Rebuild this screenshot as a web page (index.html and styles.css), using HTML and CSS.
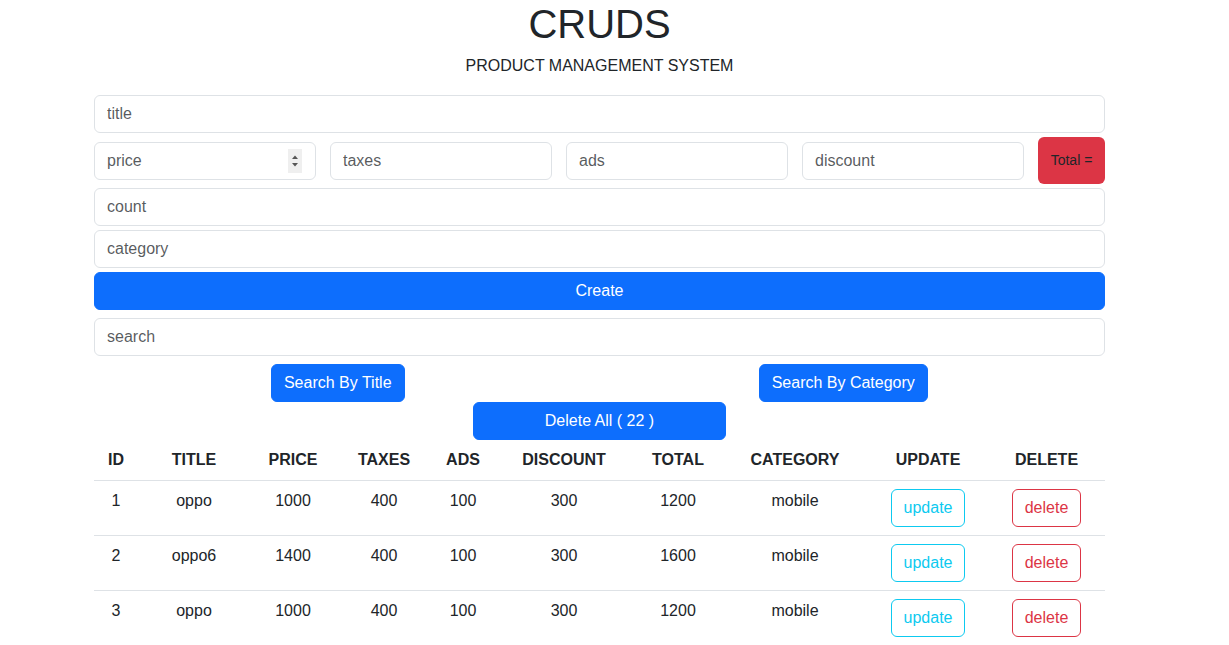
FILE: index.html
```html
<!DOCTYPE html>
<html>
<head>
<meta charset="utf-8">
<link rel="stylesheet" href="styles.css">
</head>
<body>
<div class="page">
  <header class="head">
    <h1 class="title">CRUDS</h1>
    <p class="subtitle">PRODUCT MANAGEMENT SYSTEM</p>
  </header>
  <div class="form">
    <input class="field" type="text" placeholder="title">
    <div class="price-row">
      <div class="num-wrap">
        <input class="field" type="number" placeholder="price">
        <span class="spin" aria-hidden="true">
          <svg width="14" height="24" viewBox="0 0 14 24"><path d="M4 10 L7 6.5 L10 10 Z" fill="#555"/><path d="M4 14 L7 17.5 L10 14 Z" fill="#555"/></svg>
        </span>
      </div>
      <input class="field" type="number" placeholder="taxes">
      <input class="field" type="text" placeholder="ads">
      <input class="field" type="text" placeholder="discount">
      <span class="total">Total =</span>
    </div>
    <input class="field" type="text" placeholder="count">
    <input class="field" type="text" placeholder="category">
    <button class="btn btn-primary btn-block">Create</button>
  </div>
  <div class="search">
    <input class="field" type="text" placeholder="search">
    <div class="search-btns">
      <div class="half"><button class="btn btn-primary">Search By Title</button></div>
      <div class="half"><button class="btn btn-primary">Search By Category</button></div>
    </div>
    <div class="delete-all">
      <button class="btn btn-primary btn-quarter">Delete All ( 22 )</button>
    </div>
  </div>
  <table class="table">
    <colgroup>
      <col class="c-id"><col class="c-title"><col class="c-price"><col class="c-taxes"><col class="c-ads"><col class="c-discount"><col class="c-total"><col class="c-category"><col class="c-update"><col class="c-delete">
    </colgroup>
    <thead>
      <tr><th>ID</th><th>TITLE</th><th>PRICE</th><th>TAXES</th><th>ADS</th><th>DISCOUNT</th><th>TOTAL</th><th>CATEGORY</th><th>UPDATE</th><th>DELETE</th></tr>
    </thead>
    <tbody>
      <tr><td>1</td><td>oppo</td><td>1000</td><td>400</td><td>100</td><td>300</td><td>1200</td><td>mobile</td><td><button class="btn btn-outline-info">update</button></td><td><button class="btn btn-outline-danger">delete</button></td></tr>
      <tr><td>2</td><td>oppo6</td><td>1400</td><td>400</td><td>100</td><td>300</td><td>1600</td><td>mobile</td><td><button class="btn btn-outline-info">update</button></td><td><button class="btn btn-outline-danger">delete</button></td></tr>
      <tr><td>3</td><td>oppo</td><td>1000</td><td>400</td><td>100</td><td>300</td><td>1200</td><td>mobile</td><td><button class="btn btn-outline-info">update</button></td><td><button class="btn btn-outline-danger">delete</button></td></tr>
    </tbody>
  </table>
</div>
</body>
</html>
```
FILE: styles.css
```css
* { box-sizing: border-box; }
html, body { margin: 0; padding: 0; background: #fff; }
body {
  font-family: "Liberation Sans", Arial, sans-serif;
  font-size: 16px;
  line-height: 1.5;
  color: #212529;
  overflow: hidden;
}
.page {
  width: 1011px;
  margin-left: 94px;
}
.head { text-align: center; }
.title {
  margin: 0 0 6px;
  font-size: 40px;
  font-weight: 500;
  line-height: 48px;
}
.subtitle {
  margin: 0 0 17px;
  font-size: 16px;
  line-height: 24px;
}
.form { display: flex; flex-direction: column; gap: 4px; }
.field {
  display: block;
  width: 100%;
  height: 38px;
  padding: 6px 12px;
  font: inherit;
  font-size: 16px;
  line-height: 24px;
  color: #212529;
  background: #fff;
  border: 1px solid #dee2e6;
  border-radius: 6px;
  outline: none;
}
.field::placeholder { color: rgba(33, 37, 41, 0.75); }
input[type=number]::-webkit-inner-spin-button,
input[type=number]::-webkit-outer-spin-button { -webkit-appearance: none; margin: 0; display: none; }
input[type=number] { -moz-appearance: textfield; }
.price-row {
  display: flex;
  align-items: center;
  gap: 14px;
  height: 47px;
}
.price-row .field { width: 222px; flex: none; }
.num-wrap { position: relative; width: 222px; flex: none; }
.num-wrap .field { width: 100%; }
.spin {
  position: absolute;
  right: 14px;
  top: 7px;
  width: 14px;
  height: 24px;
  background: #efefef;
  display: block;
}
.spin svg { display: block; }
.total {
  width: 67px;
  height: 47px;
  display: flex;
  align-items: center;
  justify-content: center;
  background: #dc3545;
  color: #212529;
  font-size: 14px;
  border-radius: 6px;
}
.btn {
  display: inline-block;
  height: 38px;
  padding: 6px 12px;
  font: inherit;
  font-size: 16px;
  line-height: 24px;
  border: 1px solid transparent;
  border-radius: 6px;
  cursor: pointer;
}
.btn-primary { background: #0d6efd; border-color: #0d6efd; color: #fff; }
.btn-block { width: 100%; }
.search { margin-top: 8px; }
.search-btns { display: flex; margin-top: 8px; }
.half {
  width: 50%;
  padding-right: 18px;
  text-align: center;
}
.delete-all { text-align: center; }
.btn-quarter { width: 25%; }
.table {
  width: 1011px;
  border-collapse: collapse;
  table-layout: fixed;
}
.c-id { width: 44px; }
.c-title { width: 112px; }
.c-price { width: 86px; }
.c-taxes { width: 96px; }
.c-ads { width: 62px; }
.c-discount { width: 140px; }
.c-total { width: 88px; }
.c-category { width: 146px; }
.c-update { width: 120px; }
.c-delete { width: 117px; }
.table th, .table td {
  padding: 8px;
  text-align: center;
  vertical-align: top;
  border-bottom: 1px solid #dee2e6;
}
.table th { font-weight: 700; }
.table tbody tr:last-child td { border-bottom: none; }
.btn-outline-info { background: #fff; border-color: #0dcaf0; color: #0dcaf0; }
.btn-outline-danger { background: #fff; border-color: #dc3545; color: #dc3545; }
```
